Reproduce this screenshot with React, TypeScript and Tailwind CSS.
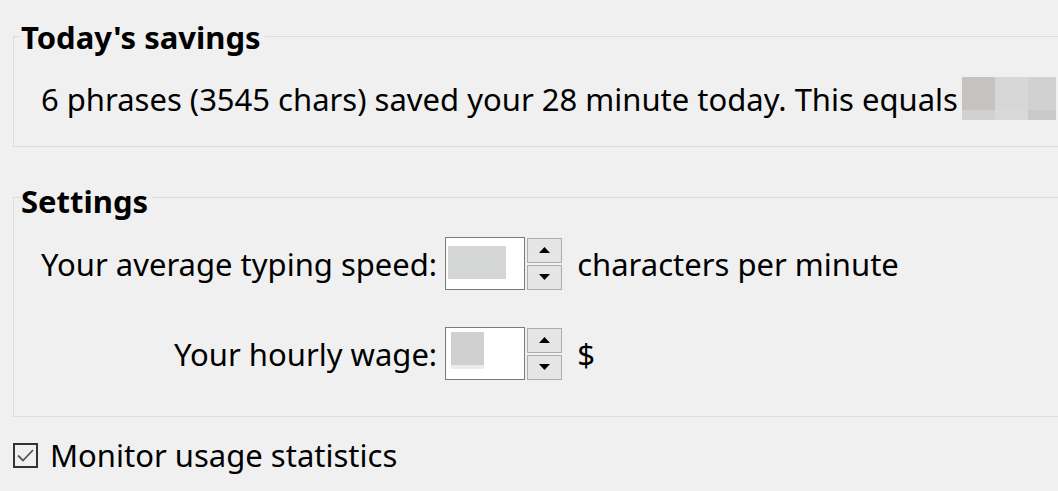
const font = { fontFamily: '"Noto Sans", "Open Sans", sans-serif' };

function Spin() {
  return (
    <div className="flex flex-col gap-[2px]">
      <button className="flex h-[25px] w-[35px] items-center justify-center border border-[#adadad] bg-[#e5e5e5]">
        <svg width="11" height="6" viewBox="0 0 11 6">
          <path d="M5.5 0 L11 6 L0 6 Z" fill="#000" />
        </svg>
      </button>
      <button className="flex h-[25px] w-[35px] items-center justify-center border border-[#adadad] bg-[#e5e5e5]">
        <svg width="11" height="6" viewBox="0 0 11 6">
          <path d="M0 0 L11 0 L5.5 6 Z" fill="#000" />
        </svg>
      </button>
    </div>
  );
}

export default function App() {
  return (
    <div className="h-[491px] w-[1058px] overflow-hidden bg-[#f0f0f0] text-black" style={font}>
      {/* Today's savings */}
      <div className="relative ml-[13px] mt-[36px] h-[111px] w-[1100px] border border-[#dcdcdc]">
        <div className="absolute left-[7px] top-[-20px] bg-[#f0f0f0] pr-[4px] text-[31px] font-bold leading-[40px]">
          Today's savings
        </div>
        <div className="flex items-center pl-[27px] pt-[40px] text-[31px] leading-[40px]">
          <span>6 phrases (3545 chars) saved your 28 minute today. This equals</span>
          <div className="ml-[4px] flex h-[43px] flex-col">
            <div className="flex h-[33px]">
              <div className="w-[33px] bg-[#c4c3c1]" />
              <div className="w-[33px] bg-[#d6d7d6]" />
              <div className="w-[28px] bg-[#d1d1d2]" />
            </div>
            <div className="flex h-[10px]">
              <div className="w-[33px] bg-[#d2d1cf]" />
              <div className="w-[33px] bg-[#d9d9d8]" />
              <div className="w-[28px] bg-[#c9c9c9]" />
            </div>
          </div>
        </div>
      </div>

      {/* Settings */}
      <div className="relative ml-[13px] mt-[50px] h-[220px] w-[1100px] border border-[#dcdcdc]">
        <div className="absolute left-[7px] top-[-17px] bg-[#f0f0f0] pr-[4px] text-[31px] font-bold leading-[40px]">
          Settings
        </div>
        <div className="grid grid-cols-[auto_auto_auto] items-center justify-start gap-y-[37px] pl-[27px] pt-[39px] text-[31px] leading-[40px]">
          <span className="text-right">Your average typing speed:</span>
          <div className="ml-[8px] mr-[15px] flex items-center gap-[2px]">
            <div className="h-[53px] w-[80px] border border-[#7a7a7a] bg-white pl-[2px] pt-[8px]">
              <div className="h-[33px] w-[58px] bg-[#d4d5d5]" />
            </div>
            <Spin />
          </div>
          <span>characters per minute</span>

          <span className="text-right">Your hourly wage:</span>
          <div className="ml-[8px] mr-[15px] flex items-center gap-[2px]">
            <div className="h-[53px] w-[80px] border border-[#7a7a7a] bg-white pl-[5px] pt-[4px]">
              <div className="h-[33px] w-[33px] bg-[#d0d0d0]" />
              <div className="h-[4px] w-[33px] bg-[#ececec]" />
            </div>
            <Spin />
          </div>
          <span>$</span>
        </div>
      </div>

      {/* Monitor usage statistics */}
      <label className="ml-[13px] mt-[18px] flex items-center gap-[12px] text-[31px] leading-[40px]">
        <span className="flex h-[25px] w-[25px] items-center justify-center border-2 border-[#333]">
          <svg width="19" height="15" viewBox="0 0 19 15">
            <path d="M2 7.5 L7 12.5 L17 2" fill="none" stroke="#555" strokeWidth="1.8" />
          </svg>
        </span>
        <span>Monitor usage statistics</span>
      </label>
    </div>
  );
}
